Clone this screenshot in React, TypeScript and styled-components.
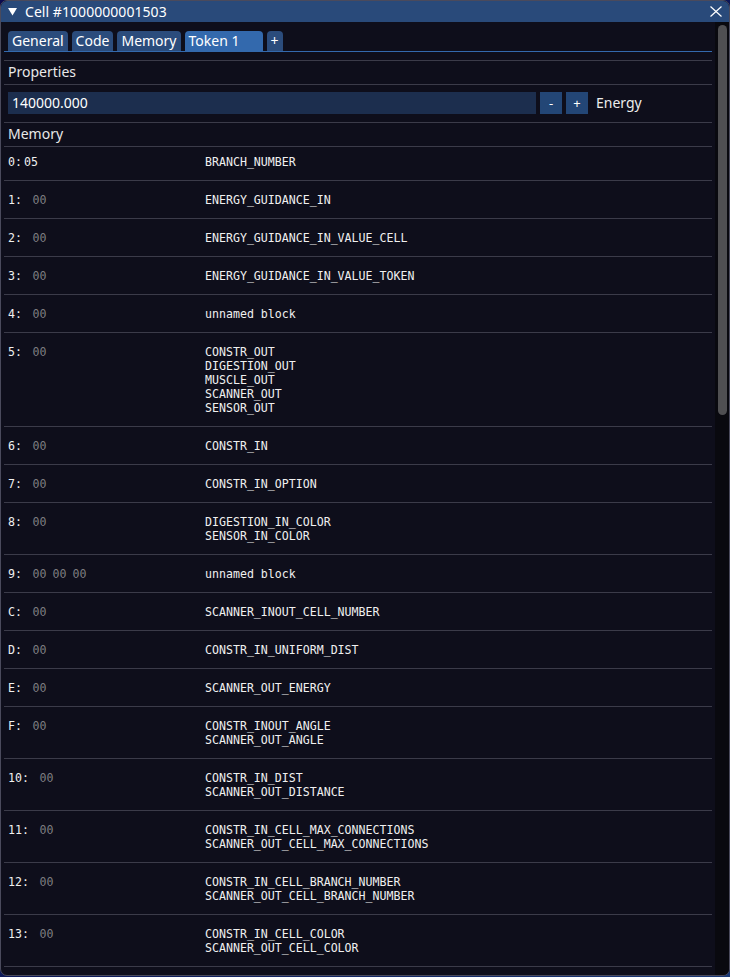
import React from "react";
import styled, { createGlobalStyle } from "styled-components";

const GlobalStyle = createGlobalStyle`
  html, body {
    margin: 0;
    padding: 0;
    background: linear-gradient(135deg, #0b0b4e 0%, #0d1a5a 60%, #1b3a78 100%);
    height: 977px;
    overflow: hidden;
  }
  * { box-sizing: border-box; }
`;

const UI_FONT = `"Noto Sans", "Open Sans", sans-serif`;
const MONO_FONT = `"DejaVu Sans Mono", "Liberation Mono", monospace`;

const Window = styled.div`
  width: 730px;
  height: 976px;
  background: #0e0e1b;
  border: 1px solid #4a4a5c;
  border-radius: 7px;
  overflow: hidden;
  display: flex;
  flex-direction: column;
  font-family: ${UI_FONT};
  font-size: 14px;
  color: #ececec;
`;

const TitleBar = styled.div`
  height: 21px;
  flex: none;
  background: #294a7a;
  display: flex;
  align-items: center;
  padding: 0 7px 0 7px;
  color: #ffffff;
  line-height: 21px;
`;

const TitleText = styled.span`
  margin-left: 8px;
  flex: 1;
  letter-spacing: 0.05px;
`;

const Body = styled.div`
  flex: 1;
  display: flex;
  min-height: 0;
  padding-left: 3px;
`;

const Content = styled.div`
  width: 708px;
  flex: none;
  overflow: hidden;
  display: flex;
  flex-direction: column;
`;

const ScrollTrack = styled.div`
  width: 14px;
  margin-left: 3px;
  flex: none;
  background: #09090f;
  padding: 3px 2px 0 3px;
`;

const ScrollThumb = styled.div`
  height: 390px;
  background: #4f4f52;
  border-radius: 5px;
`;

const TabBar = styled.div`
  margin-top: 9px;
  display: flex;
  gap: 4px;
  padding-left: 4px;
  border-bottom: 1px solid #3369ad;
  height: 21px;
`;

const Tab = styled.div<{ $active?: boolean; $width?: number }>`
  height: 20px;
  padding: 0 4px;
  ${(p) => (p.$width ? `width: ${p.$width}px;` : "")}
  background: ${(p) => (p.$active ? "#3369ad" : "#2b4c7c")};
  border-radius: 4px 4px 0 0;
  color: #ffffff;
  line-height: 20px;
  white-space: nowrap;
`;

const Separator = styled.div<{ $mt?: number }>`
  height: 1px;
  background: #3b3b49;
  margin-top: ${(p) => p.$mt ?? 0}px;
  flex: none;
`;

const SectionTitle = styled.div`
  height: 23px;
  line-height: 21px;
  padding-left: 4px;
  color: #e8e8e8;
`;

const PropRow = styled.div`
  margin-top: 7px;
  margin-bottom: 8px;
  padding-left: 4px;
  display: flex;
  align-items: center;
  height: 22px;
`;

const Input = styled.div`
  width: 528px;
  height: 22px;
  background: #1c2e4e;
  padding-left: 4px;
  line-height: 22px;
  color: #ffffff;
`;

const SmallButton = styled.div`
  width: 22px;
  height: 22px;
  margin-left: 4px;
  background: #234676;
  color: #ffffff;
  display: flex;
  align-items: center;
  justify-content: center;
  font-size: 13px;
`;

const PropLabel = styled.span`
  margin-left: 8px;
  padding-bottom: 2px;
  color: #ececec;
`;

const MemRow = styled.div<{ $first?: boolean }>`
  display: grid;
  grid-template-columns: 197px 1fr;
  padding: ${(p) => (p.$first ? "8px 0 11px 4px" : "12px 0 11px 4px")};
  font-family: ${MONO_FONT};
  font-size: 11.6px;
  line-height: 14px;
  color: #f0f0f0;
  border-bottom: 1px solid #3b3b49;
  flex: none;
`;

const AddrCell = styled.div`
  display: flex;
  white-space: pre;
`;

const Bytes = styled.span<{ $tight?: boolean; $bright?: boolean }>`
  display: inline-flex;
  gap: 6px;
  margin-left: ${(p) => (p.$tight ? 2 : 10.5)}px;
  color: ${(p) => (p.$bright ? "#f0f0f0" : "#7d7d80")};
`;

const Names = styled.div`
  display: flex;
  flex-direction: column;
  white-space: pre;
`;

type Mem = { addr: string; bytes: string[]; names: string[]; first?: boolean };

const rows: Mem[] = [
  { addr: "0:", bytes: ["05"], names: ["BRANCH_NUMBER"], first: true },
  { addr: "1:", bytes: ["00"], names: ["ENERGY_GUIDANCE_IN"] },
  { addr: "2:", bytes: ["00"], names: ["ENERGY_GUIDANCE_IN_VALUE_CELL"] },
  { addr: "3:", bytes: ["00"], names: ["ENERGY_GUIDANCE_IN_VALUE_TOKEN"] },
  { addr: "4:", bytes: ["00"], names: ["unnamed block"] },
  {
    addr: "5:",
    bytes: ["00"],
    names: ["CONSTR_OUT", "DIGESTION_OUT", "MUSCLE_OUT", "SCANNER_OUT", "SENSOR_OUT"],
  },
  { addr: "6:", bytes: ["00"], names: ["CONSTR_IN"] },
  { addr: "7:", bytes: ["00"], names: ["CONSTR_IN_OPTION"] },
  { addr: "8:", bytes: ["00"], names: ["DIGESTION_IN_COLOR", "SENSOR_IN_COLOR"] },
  { addr: "9:", bytes: ["00", "00", "00"], names: ["unnamed block"] },
  { addr: "C:", bytes: ["00"], names: ["SCANNER_INOUT_CELL_NUMBER"] },
  { addr: "D:", bytes: ["00"], names: ["CONSTR_IN_UNIFORM_DIST"] },
  { addr: "E:", bytes: ["00"], names: ["SCANNER_OUT_ENERGY"] },
  { addr: "F:", bytes: ["00"], names: ["CONSTR_INOUT_ANGLE", "SCANNER_OUT_ANGLE"] },
  { addr: "10:", bytes: ["00"], names: ["CONSTR_IN_DIST", "SCANNER_OUT_DISTANCE"] },
  {
    addr: "11:",
    bytes: ["00"],
    names: ["CONSTR_IN_CELL_MAX_CONNECTIONS", "SCANNER_OUT_CELL_MAX_CONNECTIONS"],
  },
  {
    addr: "12:",
    bytes: ["00"],
    names: ["CONSTR_IN_CELL_BRANCH_NUMBER", "SCANNER_OUT_CELL_BRANCH_NUMBER"],
  },
  { addr: "13:", bytes: ["00"], names: ["CONSTR_IN_CELL_COLOR", "SCANNER_OUT_CELL_COLOR"] },
];

const CollapseIcon = () => (
  <svg width="9" height="8" viewBox="0 0 9 8">
    <polygon points="0,0 9,0 4.5,7.5" fill="#ffffff" />
  </svg>
);

const CloseIcon = () => (
  <svg width="12" height="11" viewBox="0 0 12 11">
    <path d="M0.5 0.5 L11.5 10.5 M11.5 0.5 L0.5 10.5" stroke="#ffffff" strokeWidth="1.2" fill="none" />
  </svg>
);

export default function App() {
  return (
    <>
      <GlobalStyle />
      <Window>
        <TitleBar>
          <CollapseIcon />
          <TitleText>Cell #1000000001503</TitleText>
          <CloseIcon />
        </TitleBar>
        <Body>
          <Content>
            <TabBar>
              <Tab>General</Tab>
              <Tab>Code</Tab>
              <Tab>Memory</Tab>
              <Tab $active $width={78}>Token 1</Tab>
              <Tab>+</Tab>
            </TabBar>
            <Separator $mt={8} />
            <SectionTitle>Properties</SectionTitle>
            <Separator />
            <PropRow>
              <Input>140000.000</Input>
              <SmallButton>-</SmallButton>
              <SmallButton>+</SmallButton>
              <PropLabel>Energy</PropLabel>
            </PropRow>
            <Separator />
            <SectionTitle>Memory</SectionTitle>
            <Separator />
            {rows.map((r) => (
              <MemRow key={r.addr} $first={r.first}>
                <AddrCell>
                  {r.addr}
                  <Bytes $tight={r.first} $bright={r.first}>
                    {r.bytes.map((b, i) => (
                      <span key={i}>{b}</span>
                    ))}
                  </Bytes>
                </AddrCell>
                <Names>
                  {r.names.map((n) => (
                    <span key={n}>{n}</span>
                  ))}
                </Names>
              </MemRow>
            ))}
          </Content>
          <ScrollTrack>
            <ScrollThumb />
          </ScrollTrack>
        </Body>
      </Window>
    </>
  );
}
